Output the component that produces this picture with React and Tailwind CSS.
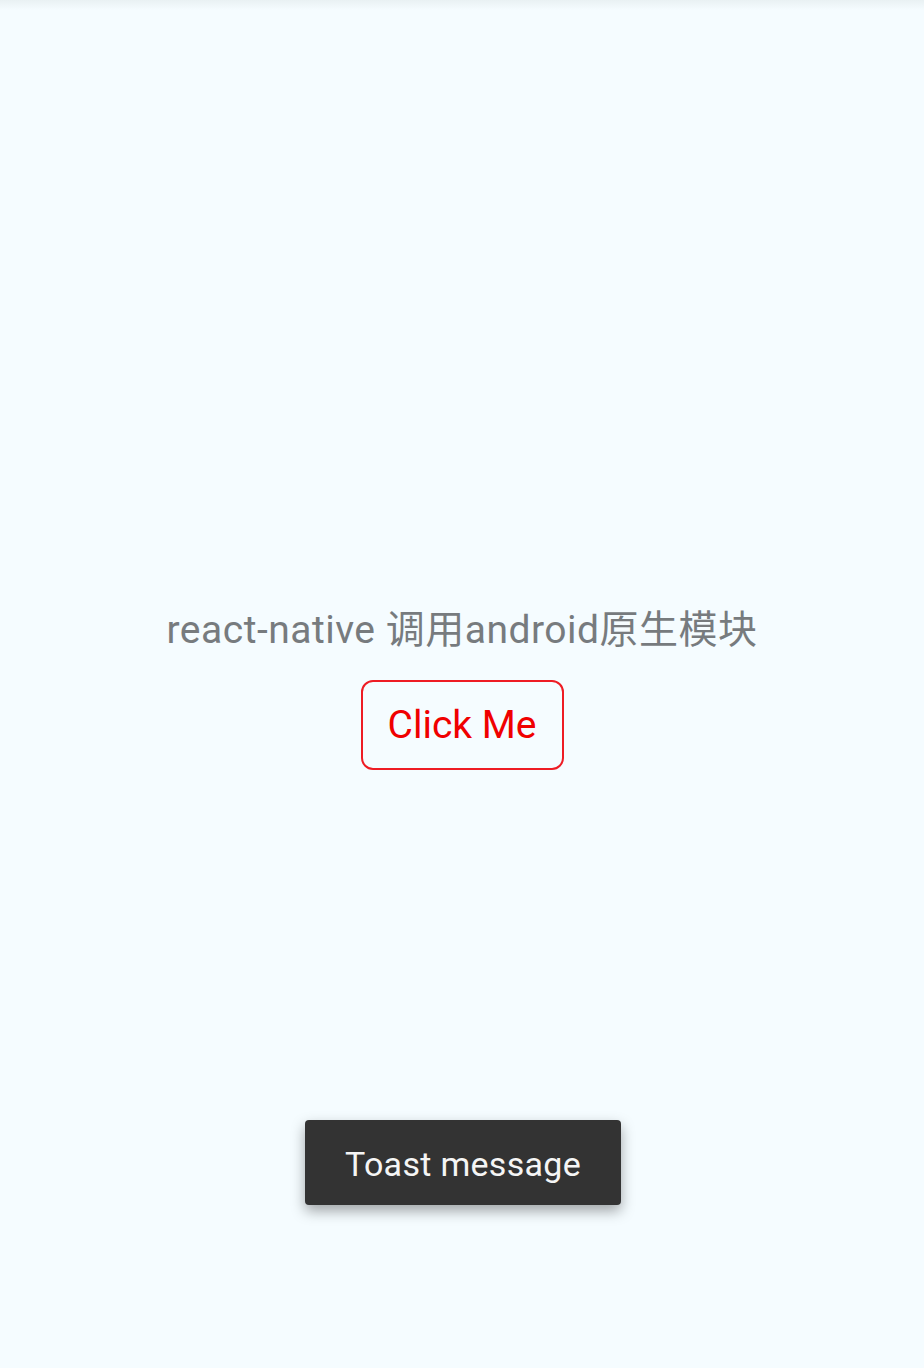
const App = () => {
  return (
    <div
      className="relative h-[1368px] w-full bg-[#F5FCFF] overflow-hidden"
      style={{ fontFamily: 'Roboto, "Noto Sans CJK SC", sans-serif' }}
    >
      <div className="absolute top-0 left-0 right-0 h-[10px] bg-gradient-to-b from-[#e9f1f3] to-transparent" />

      <div className="flex flex-col items-center pt-[606px]">
        <h1 className="text-[39px] leading-[48px] tracking-[0.5px] text-[#777b7e]">
          react-native 调用android原生模块
        </h1>

        <button className="mt-[26px] h-[90px] w-[203px] rounded-[12px] border-2 border-[#ee1c24] text-[39px] text-[#f00000]">
          Click Me
        </button>
      </div>

      <div className="absolute left-[305px] top-[1120px] flex h-[85px] w-[316px] items-center justify-center rounded-[4px] bg-[#333333] pt-[3px] shadow-[0_6px_14px_rgba(0,0,0,0.35)]">
        <span className="text-[34px] tracking-[0.3px] text-[#f5f5f5]">Toast message</span>
      </div>
    </div>
  )
}

export default App
